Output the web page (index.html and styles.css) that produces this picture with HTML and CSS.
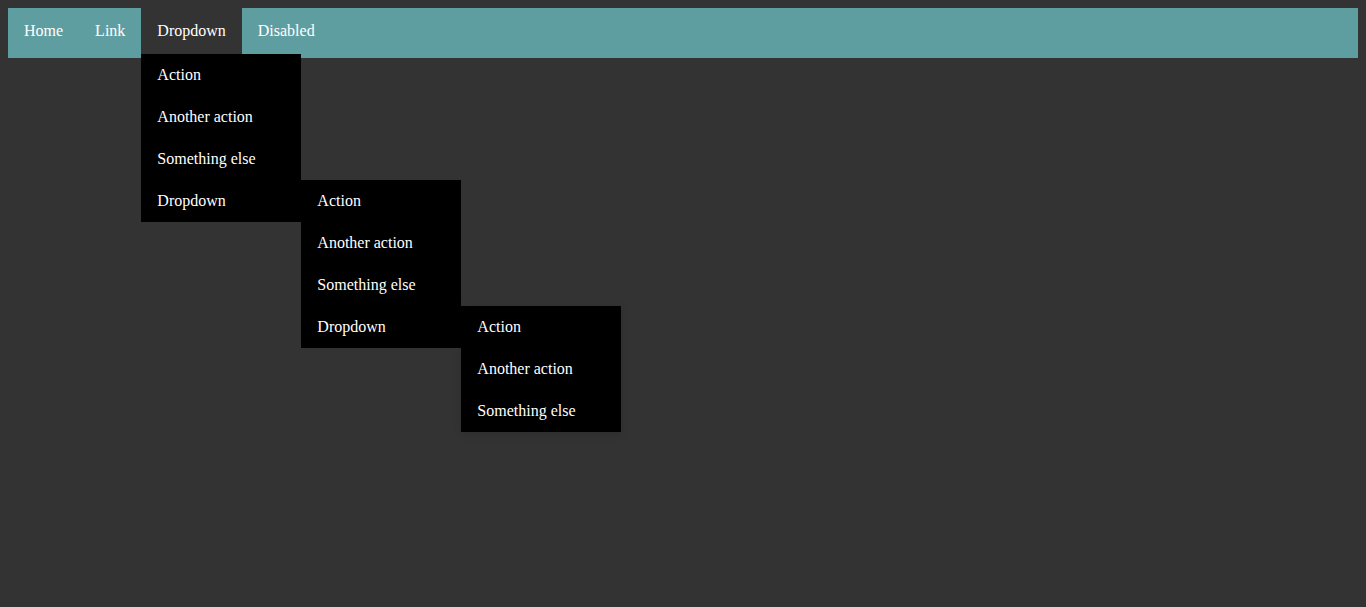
FILE: index.html
```html
<!DOCTYPE html>
<html>
<head>
<meta charset="utf-8">
<link rel="stylesheet" href="styles.css">
</head>
<body>
<nav class="navbar">
  <ul class="nav">
    <li class="nav-item"><a href="#">Home</a></li>
    <li class="nav-item"><a href="#">Link</a></li>
    <li class="nav-item active"><a href="#">Dropdown</a>
      <ul class="menu">
        <li class="menu-item"><a href="#">Action</a></li>
        <li class="menu-item"><a href="#">Another action</a></li>
        <li class="menu-item"><a href="#">Something else</a></li>
        <li class="menu-item"><a href="#">Dropdown</a>
          <ul class="menu sub">
            <li class="menu-item"><a href="#">Action</a></li>
            <li class="menu-item"><a href="#">Another action</a></li>
            <li class="menu-item"><a href="#">Something else</a></li>
            <li class="menu-item"><a href="#">Dropdown</a>
              <ul class="menu sub last">
                <li class="menu-item"><a href="#">Action</a></li>
                <li class="menu-item"><a href="#">Another action</a></li>
                <li class="menu-item"><a href="#">Something else</a></li>
              </ul>
            </li>
          </ul>
        </li>
      </ul>
    </li>
    <li class="nav-item"><a href="#">Disabled</a></li>
  </ul>
</nav>
</body>
</html>
```
FILE: styles.css
```css
html, body {
  background: #333333;
}
body {
  margin: 8px;
  min-height: calc(100vh - 16px);
  font-family: "Liberation Serif", "Times New Roman", serif;
  font-size: 16px;
  line-height: 18px;
  color: #ffffff;
}
a {
  color: #ffffff;
  text-decoration: none;
}
.navbar {
  background: #5f9ea0;
  height: 50px;
}
.nav {
  list-style: none;
  margin: 0;
  padding: 0;
  display: flex;
}
.nav-item {
  position: relative;
}
.nav-item > a {
  display: block;
  padding: 14px 16px;
}
.nav-item.active {
  background: #333333;
}
.menu {
  list-style: none;
  margin: 0;
  padding: 0;
  position: absolute;
  top: 100%;
  left: 0;
  width: 160px;
  background: #000000;
  z-index: 10;
}
.menu-item {
  position: relative;
}
.menu-item > a {
  display: block;
  padding: 12px 16px;
  white-space: nowrap;
}
.menu.sub {
  top: 0;
  left: 100%;
}
.menu.last {
  box-shadow: 0 2px 8px rgba(0, 0, 0, 0.12);
}
```
